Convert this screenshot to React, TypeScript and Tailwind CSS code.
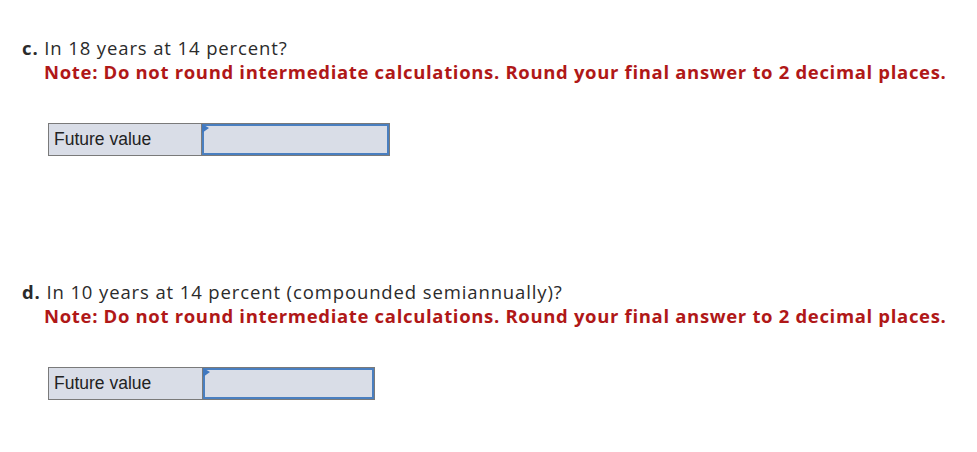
import React from 'react';

const Question = ({ letter, text, labelWidth, inputWidth, gap }: { letter: string; text: string; labelWidth: string; inputWidth: string; gap: string }) => (
  <div>
    <p className="text-[18.5px] leading-[22px] tracking-[0.88px] text-[#2b2b2b]">
      <span className="font-bold">{letter}</span> {text}
    </p>
    <p className="mt-[2px] pl-[22px] text-[18.5px] leading-[22px] tracking-[0.67px] font-bold text-[#b01818]">
      Note: Do not round intermediate calculations. Round your final answer to 2 decimal places.
    </p>
    <div className={`${gap} ml-[26px] flex`}>
      <div className={`${labelWidth} h-[33px] border border-[#7a7a7a] bg-[#d9dde7] pl-[5px] flex items-center font-['Liberation_Sans',sans-serif] text-[17.5px] text-[#222]`}>
        Future value
      </div>
      <div className={`${inputWidth} h-[33px] border border-l-0 border-[#7a7a7a] relative`}>
        <div className="h-full border-2 border-[#4a7fc0] bg-[#d9dde7]"></div>
        <svg className="absolute left-0 top-0" width="8" height="10" viewBox="0 0 8 10">
          <polygon points="0,0 7,4 0,9" fill="#3f78c0" />
        </svg>
      </div>
    </div>
  </div>
);

export default function App() {
  return (
    <div className="w-[977px] h-[452px] bg-white font-['Open_Sans',sans-serif] pl-[22px] pt-[37px]">
      <Question letter="c." text="In 18 years at 14 percent?" labelWidth="w-[154px]" inputWidth="w-[188px]" gap="mt-[40px]" />
      <div className="mt-[125px]">
        <Question letter="d." text="In 10 years at 14 percent (compounded semiannually)?" labelWidth="w-[155px]" inputWidth="w-[172px]" gap="mt-[40px]" />
      </div>
    </div>
  );
}
